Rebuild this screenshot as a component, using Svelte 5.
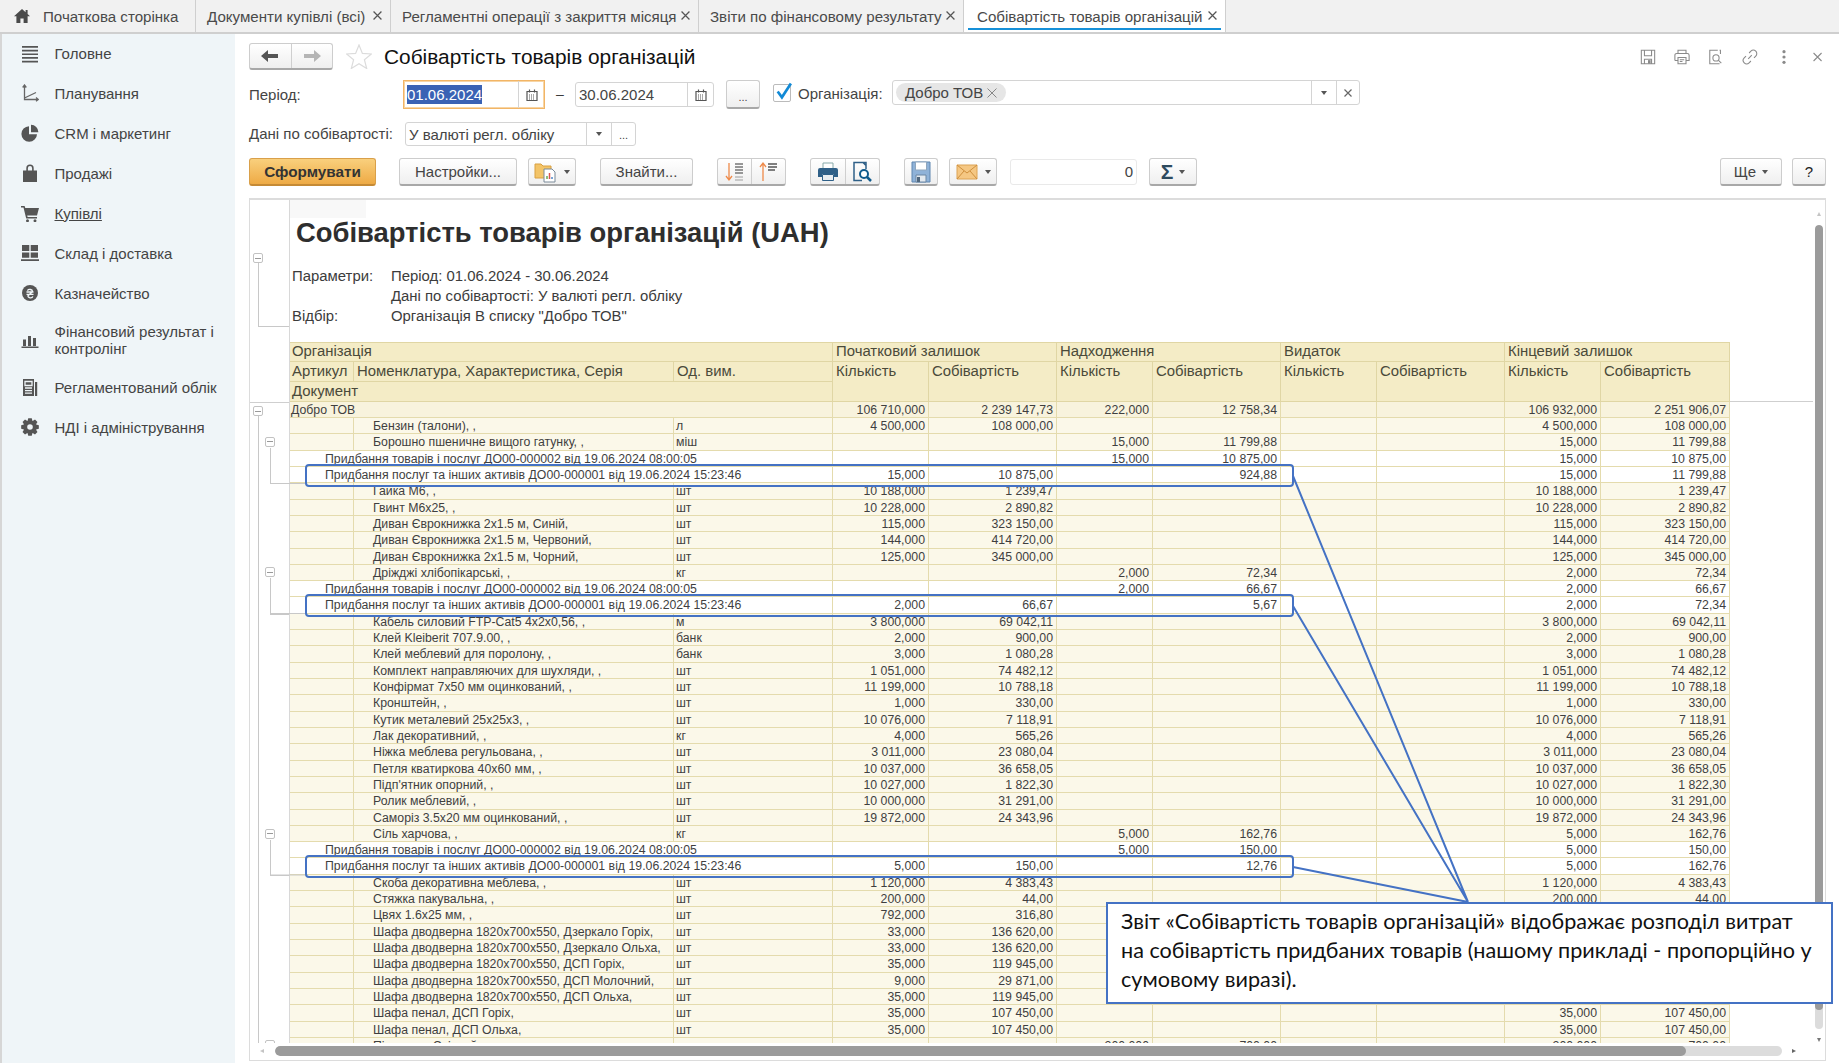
<script>
  function gear() {
    let d = '';
    const n = 8, c = 9, R = 9, r = 6.6;
    for (let i = 0; i < n; i++) {
      const a = (i / n) * Math.PI * 2;
      const s = Math.PI / n;
      const p = [[r, -s * 0.95], [R, -s * 0.5], [R, s * 0.5], [r, s * 0.95]];
      p.forEach(([q, o], j) => {
        d += (i === 0 && j === 0 ? 'M' : 'L') + (c + q * Math.cos(a + o)).toFixed(2) + ' ' + (c + q * Math.sin(a + o)).toFixed(2);
      });
    }
    return d + 'Z M9 6.2a2.8 2.8 0 1 0 0 5.6a2.8 2.8 0 1 0 0-5.6Z';
  }

  const nav = [
    { t: 'Головне', d: 'M1 1h16v1.7H1zM1 4.7h16v1.7H1zM1 8.4h16v1.7H1zM1 12.1h16v1.7H1zM1 15.8h16v1.7H1z' },
    { t: 'Планування', s: 'M3.5 1.5V15.5H17M1.7 3.5L3.5 1L5.3 3.5M15 13.6L17.4 15.5L15 17.3M3.5 14L15 8.5' },
    { t: 'CRM і маркетинг', d: 'M8 2.2a7.8 7.8 0 1 0 8 8H8zM10 .8a7.4 7.4 0 0 1 7.4 7.4H10z' },
    { t: 'Продажі', d: 'M2 6.5h14V18H2zM5.3 6.5V4.2a3.7 3.7 0 0 1 7.4 0v2.3h-1.6V4.2a2.1 2.1 0 0 0-4.2 0v2.3z' },
    { t: 'Купівлі', u: true, d: 'M0 2h3.6l.7 2H18l-2 7.5H6.2l.4 1.5H16v1.6H5.2L2.5 3.6H0zM6.5 15.2a1.5 1.5 0 1 0 0 3a1.5 1.5 0 1 0 0-3zM14 15.2a1.5 1.5 0 1 0 0 3a1.5 1.5 0 1 0 0-3z' },
    { t: 'Склад і доставка', d: 'M1 1h7.3v6H1zM9.7 1H17v6H9.7zM1 8.4h7.3v5.4H1zM9.7 8.4H17v5.4H9.7zM0 15.2h18V17H0z' },
    { t: 'Казначейство', d: 'M9 1a8 8 0 1 0 0 16a8 8 0 1 0 0-16z', w: 'M5.5 8h7M5.5 10.4h7M6.4 6.6a2.8 2.3 0 0 1 5.2 .9L7 11.7a2.4 1.8 0 0 0 4.8.6' },
    { t: 'Фінансовий результат і контролінг', two: true, d: 'M2 8.5h3V15H2zM7 5h3v10H7zM12 7h3v8h-3zM.5 15.5h17V17H.5z' },
    { t: 'Регламентований облік', d: 'M2 1h11v17H2zM14 4h2.2v14H14z', w: 'M4 3.5h7v4H4zM4 10h7M4 12.6h7M4 15.2h7' },
    { t: 'НДІ і адміністрування', d: gear() }
  ];

  const tabs = [
    { t: 'Початкова сторінка', cls: 'home' },
    { t: 'Документи купівлі (всі)', close: true },
    { t: 'Регламентні операції з закриття місяця', close: true },
    { t: 'Звіти по фінансовому результату', close: true },
    { t: 'Собівартість товарів організацій', close: true, active: true }
  ];

  const hdr2 = ['Кількість', 'Собівартість', 'Кількість', 'Собівартість', 'Кількість', 'Собівартість', 'Кількість', 'Собівартість'];

  const D1 = 'Придбання товарів і послуг ДО00-000002 від 19.06.2024 08:00:05';
  const D2 = 'Придбання послуг та інших активів ДО00-000001 від 19.06.2024 15:23:46';
  const open = (n, u, a, b) => ({ n, u, v: [a, b, '', '', '', '', a, b] });
  // rows whose closing columns lie under the callout
  const openU = (n, u, a, b) => ({ n, u, v: [a, b, '', '', '', '', '', ''] });
  const inc = (n, u, a, b) => ({ n, u, v: ['', '', a, b, '', '', a, b] });
  const doc = (n, v) => ({ n, doc: true, v });

  const rows = [
    open('Бензин (талони), ,', 'л', '4 500,000', '108 000,00'),
    inc('Борошно пшеничне вищого гатунку, ,', 'міш', '15,000', '11 799,88'),
    doc(D1, ['', '', '15,000', '10 875,00', '', '', '15,000', '10 875,00']),
    doc(D2, ['15,000', '10 875,00', '', '924,88', '', '', '15,000', '11 799,88']),
    open('Гайка М6, ,', 'шт', '10 188,000', '1 239,47'),
    open('Гвинт М6х25, ,', 'шт', '10 228,000', '2 890,82'),
    open('Диван Єврокнижка 2х1.5 м, Синій,', 'шт', '115,000', '323 150,00'),
    open('Диван Єврокнижка 2х1.5 м, Червоний,', 'шт', '144,000', '414 720,00'),
    open('Диван Єврокнижка 2х1.5 м, Чорний,', 'шт', '125,000', '345 000,00'),
    inc('Дріжджі хлібопікарські, ,', 'кг', '2,000', '72,34'),
    doc(D1, ['', '', '2,000', '66,67', '', '', '2,000', '66,67']),
    doc(D2, ['2,000', '66,67', '', '5,67', '', '', '2,000', '72,34']),
    open('Кабель силовий FTP-Cat5 4х2х0,56, ,', 'м', '3 800,000', '69 042,11'),
    open('Клей Kleiberit 707.9.00, ,', 'банк', '2,000', '900,00'),
    open('Клей меблевий для поролону, ,', 'банк', '3,000', '1 080,28'),
    open('Комплект направляючих для шухляди, ,', 'шт', '1 051,000', '74 482,12'),
    open('Конфірмат 7х50 мм оцинкований, ,', 'шт', '11 199,000', '10 788,18'),
    open('Кронштейн, ,', 'шт', '1,000', '330,00'),
    open('Кутик металевий 25х25х3, ,', 'шт', '10 076,000', '7 118,91'),
    open('Лак декоративний, ,', 'кг', '4,000', '565,26'),
    open('Ніжка меблева регульована, ,', 'шт', '3 011,000', '23 080,04'),
    open('Петля кватиркова 40х60 мм, ,', 'шт', '10 037,000', '36 658,05'),
    open("Підп'ятник опорний, ,", 'шт', '10 027,000', '1 822,30'),
    open('Ролик меблевий, ,', 'шт', '10 000,000', '31 291,00'),
    open('Саморіз 3.5х20 мм оцинкований, ,', 'шт', '19 872,000', '24 343,96'),
    inc('Сіль харчова, ,', 'кг', '5,000', '162,76'),
    doc(D1, ['', '', '5,000', '150,00', '', '', '5,000', '150,00']),
    doc(D2, ['5,000', '150,00', '', '12,76', '', '', '5,000', '162,76']),
    open('Скоба декоративна меблева, ,', 'шт', '1 120,000', '4 383,43'),
    open('Стяжка пакувальна, ,', 'шт', '200,000', '44,00'),
    openU('Цвях 1.6х25 мм, ,', 'шт', '792,000', '316,80'),
    openU('Шафа дводверна 1820х700х550, Дзеркало Горіх,', 'шт', '33,000', '136 620,00'),
    openU('Шафа дводверна 1820х700х550, Дзеркало Ольха,', 'шт', '33,000', '136 620,00'),
    openU('Шафа дводверна 1820х700х550, ДСП Горіх,', 'шт', '35,000', '119 945,00'),
    openU('Шафа дводверна 1820х700х550, ДСП Молочний,', 'шт', '9,000', '29 871,00'),
    openU('Шафа дводверна 1820х700х550, ДСП Ольха,', 'шт', '35,000', '119 945,00'),
    open('Шафа пенал, ДСП Горіх,', 'шт', '35,000', '107 450,00'),
    open('Шафа пенал, ДСП Ольха,', 'шт', '35,000', '107 450,00'),
    inc('Підставка Світлий, ,', 'шт', '200,000', '700,00')
  ];

  const RH = 16.32;
  const ry = (i) => 218 + i * RH;
  const sub = [[1, 3], [9, 11], [25, 27]].map(([a, b]) => ({ top: ry(a) + 2.5, end: ry(b) + RH }));
  const boxes = [465, 595, 856];
</script>

<div class="app">
  <div class="tabs">
    {#each tabs as tab, i}
      <div class="tab t{i}" class:active={tab.active}>
        {#if tab.cls === 'home'}
          <svg class="homeic" viewBox="0 0 16 14"><path d="M8 0L0 7.2h2.4V14h4V9.4h3.2V14h4V7.2H16L13.6 5V1h-2v2.2z" /></svg>
        {/if}
        <span>{tab.t}</span>
        {#if tab.close}
          <svg class="x" viewBox="0 0 8 8"><path d="M.5.5l7 7M7.5.5l-7 7" /></svg>
        {/if}
      </div>
    {/each}
  </div>

  <div class="body">
    <nav class="side">
      {#each nav as n}
        <div class="item" class:two={n.two}>
          <svg class="nic" viewBox="0 0 18 18">
            {#if n.d}<path fill-rule="evenodd" d={n.d} />{/if}
            {#if n.s}<path class="st" d={n.s} />{/if}
            {#if n.w}<path class="wh" d={n.w} />{/if}
          </svg>
          <span class:und={n.u}>{n.t}</span>
        </div>
      {/each}
    </nav>

    <main class="main">
      <div class="titlerow">
        <div class="btn navgroup">
          <div class="seg"><svg width="18" height="14" viewBox="0 0 18 14"><path fill="#555" d="M0 7L7 1v4h10v4H7v4z" /></svg></div>
          <div class="seg"><svg width="18" height="14" viewBox="0 0 18 14"><path fill="#b5b5b5" d="M18 7L11 1v4H1v4h10v4z" /></svg></div>
        </div>
        <svg class="star" viewBox="0 0 26 25"><path d="M13 1l3.4 8.4 9 .6-7 5.7 2.3 8.8L13 19.7 5.300 24.500l2.300-8.800-7-5.700 9-.6z" /></svg>
        <h1>Собівартість товарів організацій</h1>
        <div class="topicons">
          <svg viewBox="0 0 18 18"><path d="M1.500 1.500h15v15h-15zM5 1.500v6h8v-6M5 16.500v-5h8v5" /><path class="ff" d="M9 12.500h3v4H9z" /></svg>
          <svg viewBox="0 0 18 18"><path d="M4.500 5V1.500h9V5M1 13V7a2 2 0 0 1 2-2h12a2 2 0 0 1 2 2v6h-3M4 13H1M4.500 9.500h9v7h-9zM6.500 12h5M6.500 14h3" /></svg>
          <svg viewBox="0 0 18 18"><path d="M11 1.500H2v15h11M13 1.500h1v4" /><circle cx="9" cy="10" r="3.500" /><path d="M11.500 12.500l3.500 3.500" /></svg>
          <svg viewBox="0 0 18 18"><path d="M7 11l4-4M8 4.500l2-2a3.500 3.500 0 0 1 5.500 5.500l-2 2M10 13.500l-2 2A3.500 3.500 0 0 1 2.500 10l2-2" /></svg>
          <svg viewBox="0 0 18 18"><circle class="ff" cx="9" cy="3" r="1.800" /><circle class="ff" cx="9" cy="9" r="1.800" /><circle class="ff" cx="9" cy="15" r="1.800" /></svg>
          <svg viewBox="0 0 18 18"><path d="M4 4.500l9 9M13 4.500l-9 9" /></svg>
        </div>
      </div>

      <div class="formrow r1">
        <label class="lab l1" for="d1">Період:</label>
        <div class="field date focus" id="d1">
          <span class="val"><span class="sel">01.06.2024</span></span>
          <div class="sfx"><svg class="cal" viewBox="0 0 12 12"><path d="M1 2.500h10v9H1zM3.500.5v3M8.500.5v3" /><path class="dots" d="M3 6h6M3 8h6M3 10h6" /></svg></div>
        </div>
        <span class="dash">–</span>
        <div class="field date d2">
          <span class="val">30.06.2024</span>
          <div class="sfx"><svg class="cal" viewBox="0 0 12 12"><path d="M1 2.500h10v9H1zM3.500.5v3M8.500.5v3" /><path class="dots" d="M3 6h6M3 8h6M3 10h6" /></svg></div>
        </div>
        <div class="btn dots3">...</div>
        <div class="chk"><svg viewBox="0 0 18 18"><path d="M3.500 9l4 5.500L16 1.500" /></svg></div>
        <span class="lab orglab">Організація:</span>
        <div class="field org">
          <div class="chip">Добро ТОВ <svg viewBox="0 0 10 10"><path d="M.5.5l9 9M9.500.5l-9 9" /></svg></div>
          <div class="drop"><i class="tri"></i></div>
          <div class="clr"><svg viewBox="0 0 8 8"><path d="M.5.5l7 7M7.5.5l-7 7" /></svg></div>
        </div>
      </div>

      <div class="formrow r2">
        <span class="lab l2">Дані по собівартості:</span>
        <div class="field cur">
          <span class="val">У валюті регл. обліку</span>
          <div class="drop"><i class="tri"></i></div>
          <div class="more">...</div>
        </div>
      </div>

      <div class="toolbar">
        <div class="btn primary">Сформувати</div>
        <div class="btn b-set">Настройки...</div>
        <div class="btn b-clip">
          <svg width="24" height="22" viewBox="0 0 24 22"><path fill="#f3c468" stroke="#d9a040" d="M1 3h6l2 2h8v12H1z" /><path fill="#fff" stroke="#7a8a98" d="M10 8h8l3 3v10H10z" /><path stroke-width="1.500" d="M13 18v-3" stroke="#6aa84f" /><path stroke-width="1.500" d="M15.500 18v-6" stroke="#d9534f" /><path stroke-width="1.500" d="M18 18v-2" stroke="#4a86c8" /></svg>
          <i class="tri"></i>
        </div>
        <div class="btn b-find">Знайти...</div>
        <div class="btn b-sort">
          <div class="seg"><svg width="22" height="22" viewBox="0 0 22 22"><path fill="none" stroke="#ef8a4a" stroke-width="1.300" d="M5 2v16M2 15l3 4 3-4" /><path stroke="#777" stroke-width="1.400" d="M11 3h8M11 6h8M11 9h8M11 12h8" /><path stroke="#bbb" stroke-width="1.400" d="M11 16h8M11 19h8" /></svg></div>
          <div class="seg"><svg width="22" height="22" viewBox="0 0 22 22"><path fill="none" stroke="#ef8a4a" stroke-width="1.300" d="M5 20V3M2 6l3-4 3 4" /><path stroke="#555" stroke-width="1.400" d="M10 3h9M10 6h9M10 9h7" /></svg></div>
        </div>
        <div class="btn b-print">
          <div class="seg"><svg width="22" height="20" viewBox="0 0 22 20"><path fill="#fff" stroke="#8aa" d="M6 1h10v6H6z" /><path fill="#2f6088" d="M3 6h16a2 2 0 0 1 2 2v7h-4v-3H5v3H1V8a2 2 0 0 1 2-2z" /><path fill="#e9eef2" stroke="#2f6088" d="M5.500 12.500h11v6h-11z" /></svg></div>
          <div class="seg"><svg width="22" height="22" viewBox="0 0 22 22"><path fill="none" stroke="#2f6088" stroke-width="1.500" d="M15 8V1.500H3v18h8M12 1.500l3 3" /><circle cx="13" cy="13" r="4" fill="#fff" stroke="#0f5a8c" stroke-width="2" /><path stroke="#0f5a8c" stroke-width="2.500" d="M16 16l4 4" /></svg></div>
        </div>
        <div class="btn b-save"><svg width="20" height="22" viewBox="0 0 20 22"><path fill="#8fb2d8" stroke="#5f86b0" d="M1 1h18v20H1z" /><path fill="#fff" stroke="#8fa6bd" d="M4.500 1h11v8h-11z" /><path fill="#e3e9ef" stroke="#6a87a5" d="M5 14h10v7H5z" /><path fill="#51677d" d="M6 16h3v5H6z" /></svg></div>
        <div class="btn b-mail">
          <svg width="22" height="16" viewBox="0 0 22 16"><path fill="#f5c783" stroke="#dca355" d="M1 1h20v14H1z" /><path fill="none" stroke="#cf8f3c" d="M1 1l10 8 10-8M1 15l7-8M21 15l-7-8" /></svg>
          <i class="tri"></i>
        </div>
        <div class="numf">0</div>
        <div class="btn b-sigma"><span class="sig">Σ</span><i class="tri"></i></div>
        <div class="spacer"></div>
        <div class="btn b-more">Ще<i class="tri"></i></div>
        <div class="btn b-help">?</div>
      </div>

      <section class="panel">
        <div class="viewport">
          <div class="gutter">
            <div class="ghr"></div>
            <i class="tbox b0"></i><i class="tv v0"></i><i class="th h0"></i>
            <i class="tbox b1"></i><i class="tv v1"></i>
            {#each sub as s}
              <i class="tbox b2" style="top:{s.top}px"></i>
              <i class="tv v2" style="top:{s.top + 11}px;height:{s.end - s.top - 11}px"></i>
              <i class="th h2" style="top:{s.end}px"></i>
            {/each}
            <i class="tbox b2 last"></i>
          </div>
          <div class="sheet">
            <div class="corner"></div>
            <div class="rtitle">Собівартість товарів організацій (UAH)</div>
            <div class="params">
              <span>Параметри:</span><span>Період: 01.06.2024 - 30.06.2024</span>
              <span></span><span>Дані по собівартості: У валюті регл. обліку</span>
              <span>Відбір:</span><span>Організація В списку "Добро ТОВ"</span>
            </div>
            <div class="thead">
              <div class="hc s3">Організація</div>
              <div class="hc s2">Початковий залишок</div>
              <div class="hc s2">Надходження</div>
              <div class="hc s2">Видаток</div>
              <div class="hc s2">Кінцевий залишок</div>
              <div class="hc art">Артикул</div>
              <div class="hc">Номенклатура, Характеристика, Серія</div>
              <div class="hc">Од. вим.</div>
              {#each hdr2 as h}<div class="hc rs">{h}</div>{/each}
              <div class="hc s3">Документ</div>
            </div>
            <div class="tbody">
              <div class="row grp">
                <div class="c s3 txt grpname">Добро ТОВ</div>
                {#each ['106 710,000', '2 239 147,73', '222,000', '12 758,34', '', '', '106 932,000', '2 251 906,07'] as v}<div class="c num">{v}</div>{/each}
              </div>
              {#each rows as r}
                <div class="row" class:docr={r.doc}>
                  {#if r.doc}
                    <div class="c s3 txt docname">{r.n}</div>
                  {:else}
                    <div class="c"></div>
                    <div class="c txt nm">{r.n}</div>
                    <div class="c txt">{r.u}</div>
                  {/if}
                  {#each r.v as v}<div class="c num">{v}</div>{/each}
                </div>
              {/each}
            </div>
          </div>
          <div class="vbar">
            <i class="ar up"></i>
            <div class="vtrack"><div class="vthumb"></div></div>
            <i class="ar dn"></i>
          </div>
        </div>
        <div class="hbar">
          <i class="ar lf"></i>
          <div class="htrack"><div class="hthumb"></div></div>
          <i class="ar rt"></i>
        </div>
      </section>
    </main>
  </div>

  <svg class="notes" width="1839" height="1063" viewBox="0 0 1839 1063">
    <path d="M270 483.500H306" class="tl" />
    <path d="M270 613.500H306" class="tl" />
    <path d="M270 875H306" class="tl" />
    {#each boxes as y}
      <rect x="306" y={y} width="987" height="21" rx="3" />
    {/each}
    <path d="M1293 476L1468 902M1293 606L1468 902M1293 867L1468 902" />
  </svg>
  <div class="callout">Звіт «Собівартість товарів організацій» відображає розподіл витрат на собівартість придбаних товарів (нашому прикладі - пропорційно у сумовому виразі).</div>
</div>

<style>
  :global(body) { margin: 0; background: #fff; }
  .app { position: relative; width: 1839px; height: 1063px; overflow: hidden; display: flex; flex-direction: column; font-family: "Liberation Sans", Arial, sans-serif; color: #3c3c3c; background: #fff; }

  .tabs { height: 32px; flex: none; display: flex; background: #f1f1f1; border-bottom: 2px solid #cfcfcf; font-size: 15.100px; color: #4a4a4a; }
  .tab { height: 32px; display: flex; align-items: center; box-sizing: border-box; border-right: 1px solid #cfcfcf; position: relative; padding-left: 11px; white-space: nowrap; }
  .t0 { width: 196px; padding-left: 14px; }
  .t1 { width: 195px; }
  .t2 { width: 308px; }
  .t3 { width: 265px; }
  .t4 { width: 262px; background: #fff; padding-left: 13px; }
  .tab.active::after { content: ""; position: absolute; left: 4px; right: 4px; bottom: 2px; height: 2px; background: #1690d8; }
  .homeic { width: 16px; height: 14px; margin-right: 13px; fill: #4a4a4a; }
  .x { width: 9px; height: 9px; stroke: #555; stroke-width: 1.100; fill: none; position: absolute; right: 8px; top: 11px; }

  .body { flex: 1; min-height: 0; display: flex; }
  .side { width: 233px; box-sizing: content-box; flex: none; background: #eff5f8; border-left: 2px solid #d6d6d6; border-right: 2px solid #cfcfcf; margin-right: -2px; font-size: 15px; color: #444; padding-top: 0; }
  .item { height: 40px; display: flex; align-items: center; margin-top: 0; }
  .item:first-child { height: 39px; }
  .item.two { height: 54px; line-height: 17px; }
  .item span { width: 170px; display: block; }
  .und { text-decoration: underline; }
  .nic { width: 18px; height: 18px; margin: 0 15.500px 0 19px; fill: #555; flex: none; }
  .st { fill: none; stroke: #666; stroke-width: 1.300; }
  .wh { fill: none; stroke: #eff5f8; stroke-width: 1.300; }

  .main { flex: 1; min-width: 0; display: flex; flex-direction: column; padding: 9px 13px 2px 14px; background: #fff; }
  .titlerow { height: 27px; flex: none; display: flex; align-items: center; }
  .btn { box-sizing: border-box; display: flex; align-items: center; justify-content: center; border: 1px solid #cdcdcd; border-bottom: 2px solid #a8a8a8; border-radius: 3px; background: linear-gradient(#ffffff, #efefef); color: #444; font-size: 15px; flex: none; }
  .seg { flex: 1; height: 100%; display: flex; align-items: center; justify-content: center; }
  .seg + .seg { border-left: 1px solid #cfcfcf; }
  .navgroup { width: 84px; height: 27px; }
  .star { width: 26px; height: 25px; margin-left: 13px; fill: #fff; stroke: #dcdcdc; stroke-width: 1.200; flex: none; }
  h1 { margin: 0 0 0 12px; font-weight: 400; font-size: 20.850px; color: #111; white-space: nowrap; }
  .topicons { margin-left: auto; display: flex; gap: 18px; }
  .topicons svg { width: 16px; height: 16px; fill: none; stroke: #8a8a8a; stroke-width: 1.200; }
  .topicons .ff { fill: #8a8a8a; stroke: none; }

  .formrow { display: flex; align-items: flex-start; flex: none; }
  .r1 { height: 29px; margin-top: 10px; }
  .r2 { height: 24px; margin-top: 13px; }
  .lab { font-size: 15px; color: #444; white-space: nowrap; }
  .l1 { width: 154px; line-height: 29px; }
  .l2 { width: 156px; line-height: 24px; }
  .field { box-sizing: border-box; position: relative; display: flex; align-items: center; border: 1px solid #d4d4d4; border-radius: 3px; background: #fff; font-size: 15px; color: #444; }
  .val { flex: 1; padding-left: 3px; white-space: nowrap; }
  .date { height: 25px; margin-top: 2px; width: 139px; }
  .date.focus { width: 142px; height: 29px; margin-top: 0; border: 1px solid #f2b566; border-radius: 0; box-shadow: inset 0 0 0 1px #f7d5a5; }
  .d2 { width: 139px; }
  .sel { background: #3a62b4; color: #fff; padding: 1px 0; }
  .sfx { width: 25px; height: 100%; border-left: 1px solid #d4d4d4; display: flex; align-items: center; justify-content: center; }
  .cal { width: 12px; height: 12px; fill: none; stroke: #555; stroke-width: 1.200; }
  .dots { stroke-dasharray: 1 1; stroke-width: 1; }
  .dash { width: 30px; text-align: center; font-size: 14px; line-height: 29px; }
  .dots3 { width: 34px; height: 29px; margin-left: 12px; font-size: 11px; padding-top: 5px; }
  .chk { box-sizing: border-box; width: 18px; height: 18px; margin: 4px 0 0 13px; border: 1px solid #bbb; border-radius: 2px; position: relative; }
  .chk svg { position: absolute; left: 0; top: -3px; width: 19px; height: 19px; fill: none; stroke: #128ad6; stroke-width: 2.500; }
  .orglab { margin-left: 7px; line-height: 27px; width: 94px; }
  .org { width: 468px; height: 25px; padding-left: 3px; }
  .chip { height: 19px; width: 110px; border-radius: 10px; background: #e6e6e6; display: flex; align-items: center; padding-left: 9px; box-sizing: border-box; color: #444; gap: 4px; }
  .chip svg { width: 10px; height: 10px; fill: none; stroke: #888; stroke-width: 1; }
  .drop { width: 24px; height: 100%; border-left: 1px solid #d4d4d4; display: flex; align-items: center; justify-content: center; }
  .org .drop { margin-left: auto; }
  .clr { width: 22px; height: 100%; border-left: 1px solid #d4d4d4; display: flex; align-items: center; justify-content: center; }
  .clr svg { width: 8px; height: 8px; fill: none; stroke: #666; stroke-width: 1.200; }
  .cur { width: 231px; height: 24px; }
  .more { width: 23px; height: 100%; border-left: 1px solid #d4d4d4; text-align: center; line-height: 24px; font-size: 11px; }
  .tri { display: inline-block; width: 0; height: 0; border-left: 3.500px solid transparent; border-right: 3.500px solid transparent; border-top: 4px solid #555; }

  .toolbar { height: 28px; flex: none; margin-top: 12px; display: flex; }
  .toolbar .btn { height: 28px; }
  .toolbar .primary { width: 127px; background: linear-gradient(#f9d07d, #eeaa45); border: 1px solid #d9a04a; border-bottom: 2px solid #c58a35; font-weight: 700; font-size: 15.300px; color: #333; }
  .b-set { width: 118px; margin-left: 23px; }
  .b-clip { width: 48px; margin-left: 11px; gap: 6px; }
  .b-find { width: 93px; margin-left: 24px; }
  .b-sort { width: 69px; margin-left: 24px; }
  .b-print { width: 70px; margin-left: 24px; }
  .b-save { width: 34px; margin-left: 24px; }
  .b-mail { width: 48px; margin-left: 11px; gap: 7px; }
  .numf { box-sizing: border-box; width: 127px; height: 26px; margin: 1px 0 0 13px; border: 1px solid #e9e9e9; border-radius: 3px; text-align: right; padding-right: 3px; line-height: 24px; font-size: 15px; color: #444; }
  .b-sigma { width: 48px; margin-left: 12px; gap: 6px; }
  .sig { font-size: 21px; font-weight: 700; color: #2d4a5e; line-height: 1; }
  .spacer { flex: 1; }
  .b-more { width: 62px; gap: 6px; }
  .b-help { width: 34px; margin-left: 10px; color: #222; }

  .panel { flex: 1; min-height: 0; margin-top: 12px; box-sizing: border-box; border: 1px solid #dcdcdc; border-top-width: 2px; display: flex; flex-direction: column; }
  .viewport { flex: 1; min-height: 0; display: flex; overflow: hidden; }
  .gutter { width: 39px; flex: none; position: relative; border-right: 1px solid #d8d8d8; box-sizing: content-box; }
  .gutter i { position: absolute; display: block; }
  .ghr { position: absolute; left: 0; right: 0; top: 202px; height: 1px; background: #cfcfcf; }
  .tbox { width: 10px; height: 10px; box-sizing: border-box; border: 1px solid #c2c2c2; border-radius: 2px; background: #fff; }
  .tbox::after { content: ""; position: absolute; left: 1px; right: 1px; top: 3.500px; height: 1px; background: #999; }
  .tv { width: 1px; background: #c8c8c8; }
  .th { height: 1px; background: #c8c8c8; }
  .b0 { left: 3px; top: 53px; }
  .v0 { left: 8px; top: 63px; height: 63px; }
  .h0 { left: 8px; top: 126px; width: 31px; }
  .b1 { left: 3px; top: 206px; }
  .v1 { left: 8px; top: 216px; height: 700px; }
  .b2 { left: 15px; }
  .v2 { left: 20px; }
  .h2 { left: 20px; width: 19px; }
  .last { top: 840px; }

  .sheet { flex: 1; min-width: 0; overflow: hidden; }
  .corner { width: 76px; height: 18px; background: #f8f8f8; }
  .rtitle { height: 30px; line-height: 30px; padding-left: 6px; font-size: 27.400px; font-weight: 700; color: #2e2e2e; white-space: nowrap; }
  .params { margin-top: 18px; height: 60px; padding-left: 2px; display: grid; grid-template-columns: 99px 1fr; grid-auto-rows: 20px; line-height: 20px; font-size: 14.900px; color: #3c3c3c; }
  .thead, .row { display: grid; grid-template-columns: 64px 320px 159px 96px 128px 96px 128px 96px 128px 96px 129px; width: 1440px; }
  .thead { margin-top: 16px; height: 60px; grid-template-rows: 20px 20px 20px; background: #f4ecc6; box-sizing: border-box; font-size: 14.900px; color: #4a4a3a; }
  .hc { box-sizing: border-box; padding-left: 3px; line-height: 19px; border-right: 1px solid #e0d6a4; border-bottom: 1px solid #e0d6a4; border-top: 0; white-space: nowrap; overflow: hidden; }
  .hc.s3, .hc.art { padding-left: 2px; }
  .thead .hc:nth-child(-n+5) { box-shadow: inset 0 1px #e0d6a4; }
  .s3 { grid-column: span 3; }
  .s2 { grid-column: span 2; }
  .rs { grid-row: span 2; }

  .tbody { box-shadow: 0 -1px 0 #cfcfcf; }
  .row { height: 16.320px; background: #fbf8e9; font-size: 12.300px; color: #3f3f3f; }
  .row.grp { background: #f8f3dd; height: 16px; }
  .row.docr { background: #fff; }
  .c { box-sizing: border-box; height: 100%; line-height: 17px; border-right: 1px solid #e4dbad; border-bottom: 1px solid #e4dbad; white-space: nowrap; overflow: hidden; }
  .txt { padding-left: 2px; }
  .nm { padding-left: 19px; }
  .docname { padding-left: 35px; }
  .grpname { padding-left: 1px; }
  .num { text-align: right; padding-right: 3px; }

  .vbar { width: 12px; flex: none; position: relative; display: flex; flex-direction: column; align-items: center; padding-top: 12px; box-sizing: border-box; margin-left: auto; }
  .vtrack { width: 8px; height: 804px; margin-top: 9px; background: #dcdcdc; border-radius: 4px; overflow: hidden; }
  .vthumb { height: 785px; background: #9b9b9b; border-radius: 4px; }
  .ar { display: block; width: 0; height: 0; }
  .up { border-left: 2.500px solid transparent; border-right: 2.500px solid transparent; border-bottom: 4px solid #c4c4c4; }
  .dn { margin-top: 9px; border-left: 2.500px solid transparent; border-right: 2.500px solid transparent; border-top: 4px solid #777; }
  .hbar { height: 15px; flex: none; display: flex; align-items: center; padding: 0 0 2px 10px; }
  .lf { border-top: 2.500px solid transparent; border-bottom: 2.500px solid transparent; border-right: 4px solid #c4c4c4; margin-right: 11px; }
  .rt { border-top: 2.500px solid transparent; border-bottom: 2.500px solid transparent; border-left: 4px solid #666; margin-left: 10px; }
  .htrack { width: 1507px; height: 10px; background: #dcdcdc; border-radius: 5px; overflow: hidden; }
  .hthumb { width: 1411px; height: 100%; background: #9b9b9b; border-radius: 5px; }

  .notes { position: absolute; left: 0; top: 0; pointer-events: none; fill: none; stroke: #4472c4; stroke-width: 2; }
  .notes .tl { stroke: #c8c8c8; stroke-width: 1; }
  .callout { position: absolute; left: 1106px; top: 902px; width: 727px; height: 102px; box-sizing: border-box; border: 2px solid #4472c4; background: #fff; padding: 3px 10px 3px 13px; font-family: Lato, "Open Sans", "Noto Sans", sans-serif; font-size: 21.600px; line-height: 29px; color: #111; }
</style>
